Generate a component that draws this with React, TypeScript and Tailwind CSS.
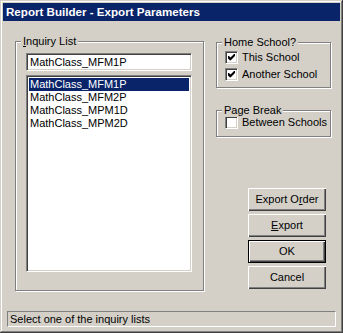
import React from 'react';

const font = { fontFamily: '"Liberation Sans", Arial, sans-serif' };

const items = ['MathClass_MFM1P', 'MathClass_MFM2P', 'MathClass_MPM1D', 'MathClass_MPM2D'];

function CheckBox({ checked, label }: { checked: boolean; label: string }) {
  return (
    <div className="flex items-center h-[17px]">
      <div className="w-[13px] h-[13px] bg-white border-t border-l border-[#808080] border-b border-r border-b-white border-r-white shadow-[inset_1px_1px_0_#404040,inset_-1px_-1px_0_#d4d0c8] flex items-center justify-center">
        {checked && (
          <svg width="7" height="7" viewBox="0 0 7 7">
            <path d="M0 2h1l1.5 1.5L6 0h1v2L2.5 6.5h-0.5L0 4.5z" fill="#000" />
          </svg>
        )}
      </div>
      <span className="ml-[4px] text-[11px] text-black">{label}</span>
    </div>
  );
}

function Button({ children, isDefault }: { children: React.ReactNode; isDefault?: boolean }) {
  return (
    <div
      className={`w-[78px] h-[23px] flex items-center justify-center text-[11px] text-black bg-[#d4d0c8] ${
        isDefault
          ? 'border border-black shadow-[inset_1px_1px_0_#fff,inset_-1px_-1px_0_#404040,inset_-2px_-2px_0_#808080]'
          : 'shadow-[inset_1px_1px_0_#fff,inset_-1px_-1px_0_#404040,inset_-2px_-2px_0_#808080]'
      }`}
    >
      {children}
    </div>
  );
}

export default function App() {
  return (
    <div
      style={font}
      className="w-[343px] h-[333px] bg-[#d4d0c8] p-[3px] flex flex-col shadow-[inset_-1px_-1px_0_#404040,inset_1px_1px_0_#d4d0c8,inset_-2px_-2px_0_#808080,inset_2px_2px_0_#fff]"
    >
      {/* title bar */}
      <div className="h-[18px] bg-[#0a246a] flex items-center pl-[3px]">
        <span className="text-white font-bold text-[11.6px]">Report Builder - Export Parameters</span>
      </div>

      <div className="flex items-start">
        {/* Inquiry List group */}
        <div className="relative ml-[12px] mt-[20px] w-[189px] h-[250px] border border-[#808080] shadow-[1px_1px_0_#fff,inset_1px_1px_0_#fff] pl-[10px] pt-[11px]">
          <span className="absolute left-[5px] top-[-8px] px-[2px] bg-[#d4d0c8] text-[11px] text-black leading-[14px]">
            <span className="underline">I</span>nquiry List
          </span>
          <div className="w-[166px] h-[18px] bg-white border-t border-l border-[#808080] border-b border-r border-b-white border-r-white shadow-[inset_1px_1px_0_#404040,inset_-1px_-1px_0_#d4d0c8] flex items-center pl-[3px] text-[11px] text-black">
            MathClass_MFM1P
          </div>
          <div className="mt-[4px] w-[166px] h-[197px] bg-white border-t border-l border-[#808080] border-b border-r border-b-white border-r-white shadow-[inset_1px_1px_0_#404040,inset_-1px_-1px_0_#d4d0c8] p-[2px]">
            {items.map((item, i) => (
              <div
                key={item}
                className={`h-[13px] leading-[13px] pl-[1px] text-[11px] ${
                  i === 0 ? 'bg-[#0a246a] text-white' : 'text-black'
                }`}
              >
                {item}
              </div>
            ))}
          </div>
        </div>

        {/* right column */}
        <div className="ml-[12px] mt-[21px] w-[116px] flex flex-col">
          <div className="relative w-[115px] h-[46px] border border-[#808080] shadow-[1px_1px_0_#fff,inset_1px_1px_0_#fff] pl-[8px] pt-[6px]">
            <span className="absolute left-[5px] top-[-8px] px-[2px] bg-[#d4d0c8] text-[11px] text-black leading-[14px]">
              Home School?
            </span>
            <CheckBox checked label="This School" />
            <CheckBox checked label="Another School" />
          </div>
          <div className="relative mt-[22px] w-[115px] h-[27px] border border-[#808080] shadow-[1px_1px_0_#fff,inset_1px_1px_0_#fff] pl-[8px] pt-[3px]">
            <span className="absolute left-[5px] top-[-8px] px-[2px] bg-[#d4d0c8] text-[11px] text-black leading-[14px]">
              Page Break
            </span>
            <CheckBox checked={false} label="Between Schools" />
          </div>

          <div className="mt-[51px] ml-[32px] flex flex-col gap-[3px]">
            <Button>
              Export O<span className="underline">r</span>der
            </Button>
            <Button>
              <span className="underline">E</span>xport
            </Button>
            <Button isDefault>OK</Button>
            <Button>Cancel</Button>
          </div>
        </div>
      </div>

      {/* status bar */}
      <div className="mt-auto mb-[3px] mx-[4px] h-[16px] border-t border-l border-[#808080] border-b border-r border-b-white border-r-white flex items-center pl-[2px] text-[11px] text-black">
        Select one of the inquiry lists
      </div>
    </div>
  );
}
